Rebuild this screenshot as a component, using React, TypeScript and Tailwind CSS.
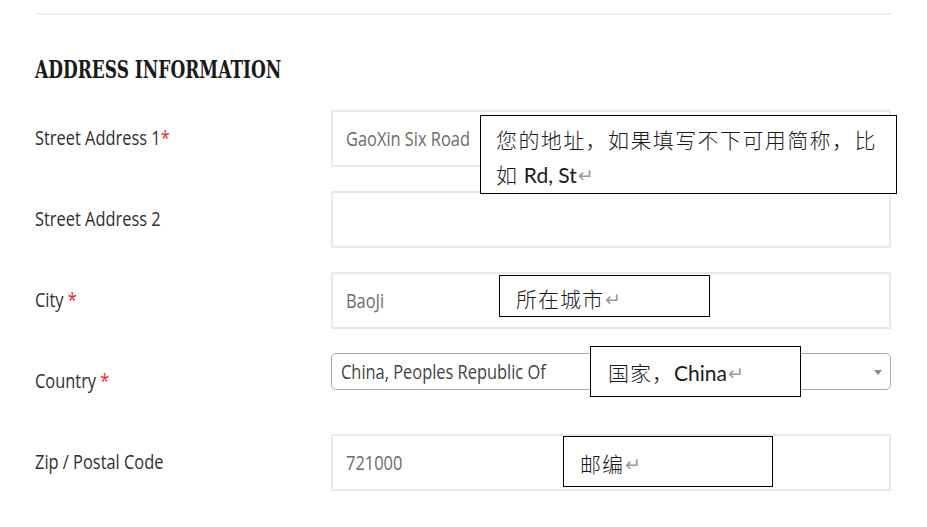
import React from "react";

const Star = () => <span className="text-[#e8262d]">*</span>;

function Label({ children }: { children: React.ReactNode }) {
  return (
    <div className="flex h-[57px] items-center pb-[2px]">
      <span className="inline-block origin-left scale-x-[0.82] whitespace-nowrap font-['Open_Sans',sans-serif] text-[20px] leading-none text-[#2f2f2f]">
        {children}
      </span>
    </div>
  );
}

function TextBox({ value }: { value?: string }) {
  return (
    <div className="flex h-[57px] items-center border-2 border-[#e9e9ec] bg-white pl-[13px]">
      {value ? (
        <span className="inline-block origin-left scale-x-[0.82] whitespace-nowrap font-['Open_Sans',sans-serif] text-[20px] leading-none text-[#6b6b6b]">
          {value}
        </span>
      ) : null}
    </div>
  );
}

function Ret() {
  return <span className="ml-[1px] align-[1px] font-['DejaVu_Sans',sans-serif] text-[19px] font-normal leading-none tracking-normal text-[#9a9a9a]">↵</span>;
}

function Cjk({ children }: { children: React.ReactNode }) {
  return <span className="font-['Noto_Sans_CJK_SC',sans-serif] font-light">{children}</span>;
}

export default function App() {
  return (
    <div className="relative h-[527px] w-[927px] overflow-hidden bg-white">
      <div className="px-[35px]">
        <div className="mt-[13px] h-[2px] w-[857px] bg-[#efefef]" />
        <div className="mt-[42px] h-[25px] whitespace-nowrap">
          <span className="inline-block origin-left scale-x-[0.68] font-['DejaVu_Serif',serif] text-[25px] font-bold leading-none text-[#1a1a1a]">
            ADDRESS INFORMATION
          </span>
        </div>
        <div className="mt-[28px] grid grid-cols-[296px_560px] gap-y-[24px]">
          <Label>
            Street Address 1<Star />
          </Label>
          <TextBox value="GaoXin Six Road" />

          <Label>Street Address 2</Label>
          <TextBox />

          <Label>
            City <Star />
          </Label>
          <TextBox value="BaoJi" />

          <Label>
            Country <Star />
          </Label>
          <div className="h-[57px]">
            <div className="flex h-[37px] items-center justify-between rounded-[5px] border border-[#ababab] bg-white pl-[9px] pr-[8px] pt-[1px]">
              <span className="inline-block origin-left scale-x-[0.82] whitespace-nowrap font-['Open_Sans',sans-serif] text-[20px] leading-none text-[#444444]">
                China, Peoples Republic Of
              </span>
              <svg width="8" height="5" viewBox="0 0 8 5">
                <path d="M0 0 L8 0 L4 5 Z" fill="#888888" />
              </svg>
            </div>
          </div>

          <Label>Zip / Postal Code</Label>
          <TextBox value="721000" />
        </div>
      </div>

      {/* annotation callouts */}
      <div className="absolute left-[480px] top-[115px] h-[79px] w-[417px] border border-black bg-white pl-[15px] pt-[6px] font-['Lato','Noto_Sans_CJK_SC',sans-serif] text-[21px] leading-[35px] tracking-[1.4px] text-[#1a1a1a]">
        <div className="whitespace-nowrap">
          <Cjk>您的地址，如果填写不下可用简称，比</Cjk>
        </div>
        <div className="whitespace-nowrap">
          <Cjk>如</Cjk>
          <span className="tracking-normal"> Rd, St</span>
          <Ret />
        </div>
      </div>

      <div className="absolute left-[499px] top-[275px] h-[42px] w-[211px] border border-black bg-white pl-[16px] pt-[7px] font-['Lato','Noto_Sans_CJK_SC',sans-serif] text-[21px] leading-[30px] tracking-[1px] text-[#1a1a1a]">
        <div className="whitespace-nowrap">
          <Cjk>所在城市</Cjk>
          <Ret />
        </div>
      </div>

      <div className="absolute left-[590px] top-[346px] h-[51px] w-[211px] border border-black bg-white pl-[17px] pt-[10px] font-['Lato','Noto_Sans_CJK_SC',sans-serif] text-[21px] leading-[30px] tracking-[1px] text-[#1a1a1a]">
        <div className="whitespace-nowrap">
          <Cjk>国家，</Cjk>
          <span className="tracking-normal">China</span>
          <Ret />
        </div>
      </div>

      <div className="absolute left-[563px] top-[436px] h-[51px] w-[210px] border border-black bg-white pl-[16px] pt-[11px] font-['Lato','Noto_Sans_CJK_SC',sans-serif] text-[21px] leading-[30px] tracking-[1px] text-[#1a1a1a]">
        <div className="whitespace-nowrap">
          <Cjk>邮编</Cjk>
          <Ret />
        </div>
      </div>
    </div>
  );
}
